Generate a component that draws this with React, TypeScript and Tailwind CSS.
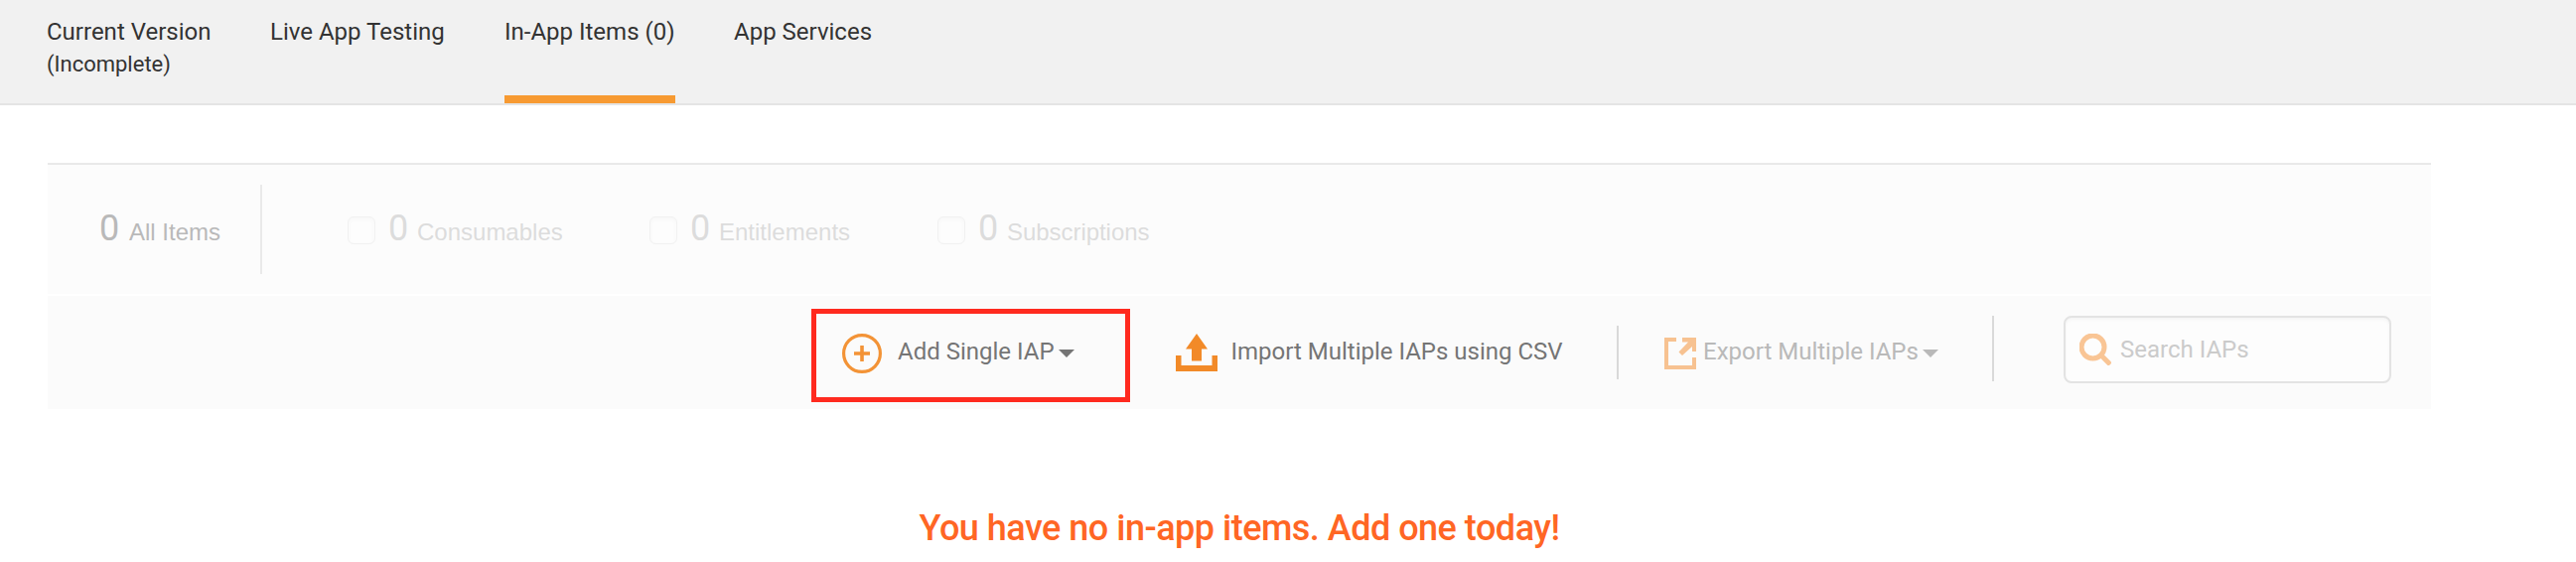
const filters = [
  { label: "Consumables", className: "w-[304px]" },
  { label: "Entitlements", className: "w-[290px]" },
  { label: "Subscriptions", className: "w-[290px] tracking-[-0.05px]" },
];

function Caret({ className }: { className: string }) {
  return (
    <svg className={className} width="16" height="8" viewBox="0 0 16 8" fill="currentColor">
      <path d="M0 0H16L8 8Z" />
    </svg>
  );
}

function PlusIcon() {
  return (
    <svg width="40" height="40" viewBox="0 0 40 40" fill="none" stroke="#f39336">
      <circle cx="20" cy="20" r="18.4" strokeWidth="3.2" />
      <path d="M20 12V28M12 20H28" strokeWidth="3.6" />
    </svg>
  );
}

function ImportIcon() {
  return (
    <svg width="42" height="38" viewBox="0 0 42 38" fill="#f28a28">
      <path d="M21 0L32 15.5H26V27.5H16V15.5H10Z" />
      <path d="M0 22H5.5V32H36.5V22H42V38H0Z" />
    </svg>
  );
}

function ExportIcon() {
  return (
    <svg width="32" height="32" viewBox="0 0 32 32" fill="#f7c291">
      <path d="M0 0H12V4H4V28H28V20H32V32H0Z" />
      <path d="M18 0H32V14H28V9L18 18L14.5 14.5L24 4.5H18Z" />
    </svg>
  );
}

function SearchIcon() {
  return (
    <svg width="32" height="32" viewBox="0 0 32 32" fill="none" stroke="#f9c595" strokeWidth="5">
      <circle cx="13.5" cy="13.5" r="11.5" />
      <path d="M21.5 21.5L31 31" />
    </svg>
  );
}

export default function App() {
  return (
    <div className="h-[566px] w-[2594px] overflow-hidden bg-white font-['Roboto',sans-serif] text-2xl">
      <nav className="flex h-[106px] items-stretch gap-[60px] border-b-2 border-[#e4e4e4] bg-[#f1f1f1] pl-[47px] text-[#333]">
        <div className="w-[165px] whitespace-nowrap pt-4">
          <div className="leading-8">Current Version</div>
          <div className="pt-px text-[22px] leading-8">(Incomplete)</div>
        </div>
        <div className="w-[176px] whitespace-nowrap pt-4 leading-8">Live App Testing</div>
        <div className="w-[172px] whitespace-nowrap border-b-8 border-[#f79a32] pt-4 leading-8">In-App Items (0)</div>
        <div className="-ml-px whitespace-nowrap pt-4 leading-8">App Services</div>
      </nav>

      <main className="ml-12 mt-[58px] w-[2400px]">
        <div className="flex h-[132px] items-start border-t-2 border-[#e9e9e9] bg-[#fcfcfc] font-['Liberation_Sans',sans-serif] text-[#dcdcdc]">
          <div className="mt-5 flex h-[90px] w-[216px] items-baseline border-r-2 border-[#e9e9e9] pl-[52px] pt-4 text-[#b9b9b9]">
            <span className="w-[30px] font-['Roboto',sans-serif] text-4xl leading-[56px]">0</span>
            <span className="whitespace-nowrap">All Items</span>
          </div>
          <div className="flex pl-[86px]">
            {filters.map((f) => (
              <div key={f.label} className={`flex ${f.className}`}>
                <span className="mt-[52px] size-7 shrink-0 rounded-md border border-[#f1f1f1] bg-[#fdfdfd] shadow-[inset_0_2px_4px_#f7f7f7]" />
                <div className="ml-[13px] flex items-baseline pt-9">
                  <span className="w-[29px] font-['Roboto',sans-serif] text-4xl leading-[56px]">0</span>
                  <span className="whitespace-nowrap">{f.label}</span>
                </div>
              </div>
            ))}
          </div>
        </div>

        <div className="mt-[2px] flex h-[114px] items-start bg-[#fbfbfb] text-[#757575]">
          <div className="ml-[769px] mt-[13px] flex h-[94px] w-[321px] items-start border-5 border-[#ff2a1f] pl-[26px] pt-5">
            <PlusIcon />
            <span className="ml-4 w-[162px] whitespace-nowrap pt-[2px] leading-8">Add Single IAP</span>
            <Caret className="mt-4" />
          </div>
          <div className="ml-[46px] mt-[38px] flex w-[444px] items-start">
            <ImportIcon />
            <span className="ml-[13.5px] whitespace-nowrap pt-[2px] leading-8">Import Multiple IAPs using CSV</span>
          </div>
          <div className="mt-[30px] h-[54px] w-[2px] bg-[#d9d9d9]" />
          <div className="ml-[46px] mt-[38px] flex w-[330px] items-start text-[#b9b9b9]">
            <span className="mt-1">
              <ExportIcon />
            </span>
            <span className="ml-[7px] w-[221px] whitespace-nowrap pt-[2px] leading-8">Export Multiple IAPs</span>
            <Caret className="mt-4" />
          </div>
          <div className="mt-5 h-[66px] w-[2px] bg-[#d9d9d9]" />
          <div className="ml-[70px] mt-5 flex h-[68px] w-[330px] items-start rounded-lg border-2 border-[#e3e3e3] bg-[#fdfdfd] pl-[14px] pt-4 text-[#cbcbcb] shadow-[inset_0_2px_3px_#f4f4f4]">
            <SearchIcon />
            <span className="ml-[9px] whitespace-nowrap leading-8">Search IAPs</span>
          </div>
        </div>

        <h1 className="mt-[99px] w-[2400px] text-center text-4xl font-medium leading-[42px] tracking-[-0.5px] text-[#ff6624]">
          You have no in-app items. Add one today!
        </h1>
      </main>
    </div>
  );
}
